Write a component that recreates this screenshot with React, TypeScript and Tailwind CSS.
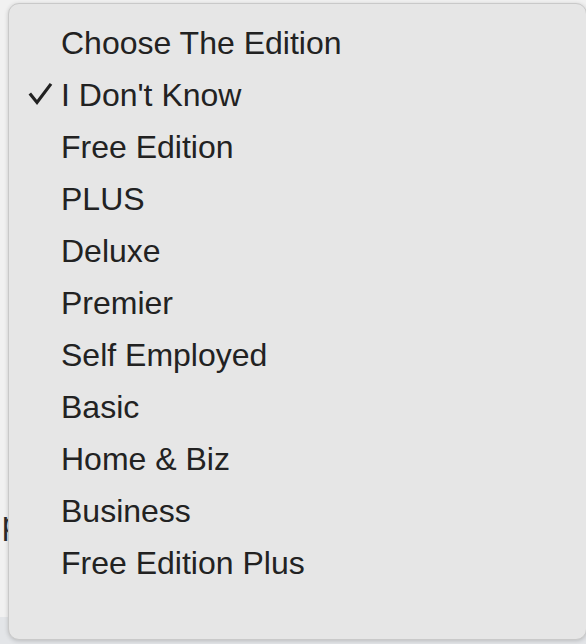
import React from "react";

const items = [
  "Choose The Edition",
  "I Don't Know",
  "Free Edition",
  "PLUS",
  "Deluxe",
  "Premier",
  "Self Employed",
  "Basic",
  "Home & Biz",
  "Business",
  "Free Edition Plus",
];

function Check() {
  return (
    <svg width="26" height="26" viewBox="0 0 26 26" className="absolute left-[-33px] top-[4px] overflow-visible" fill="none">
      <polyline points="1.8,12.6 9,21.4 23,2.9" stroke="#222" strokeWidth="3.2" strokeLinecap="butt" strokeLinejoin="miter" />
    </svg>
  );
}

export default function App() {
  return (
    <div className="relative w-[586px] h-[644px] overflow-hidden bg-[#f1f1f1]" style={{ fontFamily: '"Liberation Sans", Arial, sans-serif' }}>
      <div className="absolute left-0 right-0 bottom-0 h-[27px] bg-[#e3e5e8]" />
      <div className="absolute left-[2px] top-[503px] text-[32px] leading-[40px] text-[#2a2a2a]">p</div>
      <div className="absolute left-[8px] top-[3px] w-[579px] h-[637px] rounded-[11px] bg-[#e6e6e6] border border-[#c9c9c9] shadow-[0_1px_4px_rgba(0,0,0,0.18)] pt-[13px]">
        <ul className="flex flex-col">
          {items.map((t, i) => (
            <li key={t} className="relative h-[52px] pl-[52px] text-[32px] leading-[52px] text-[#222222] whitespace-nowrap">
              <span className="relative">
                {i === 1 && <Check />}
                {t}
              </span>
            </li>
          ))}
        </ul>
      </div>
    </div>
  );
}
